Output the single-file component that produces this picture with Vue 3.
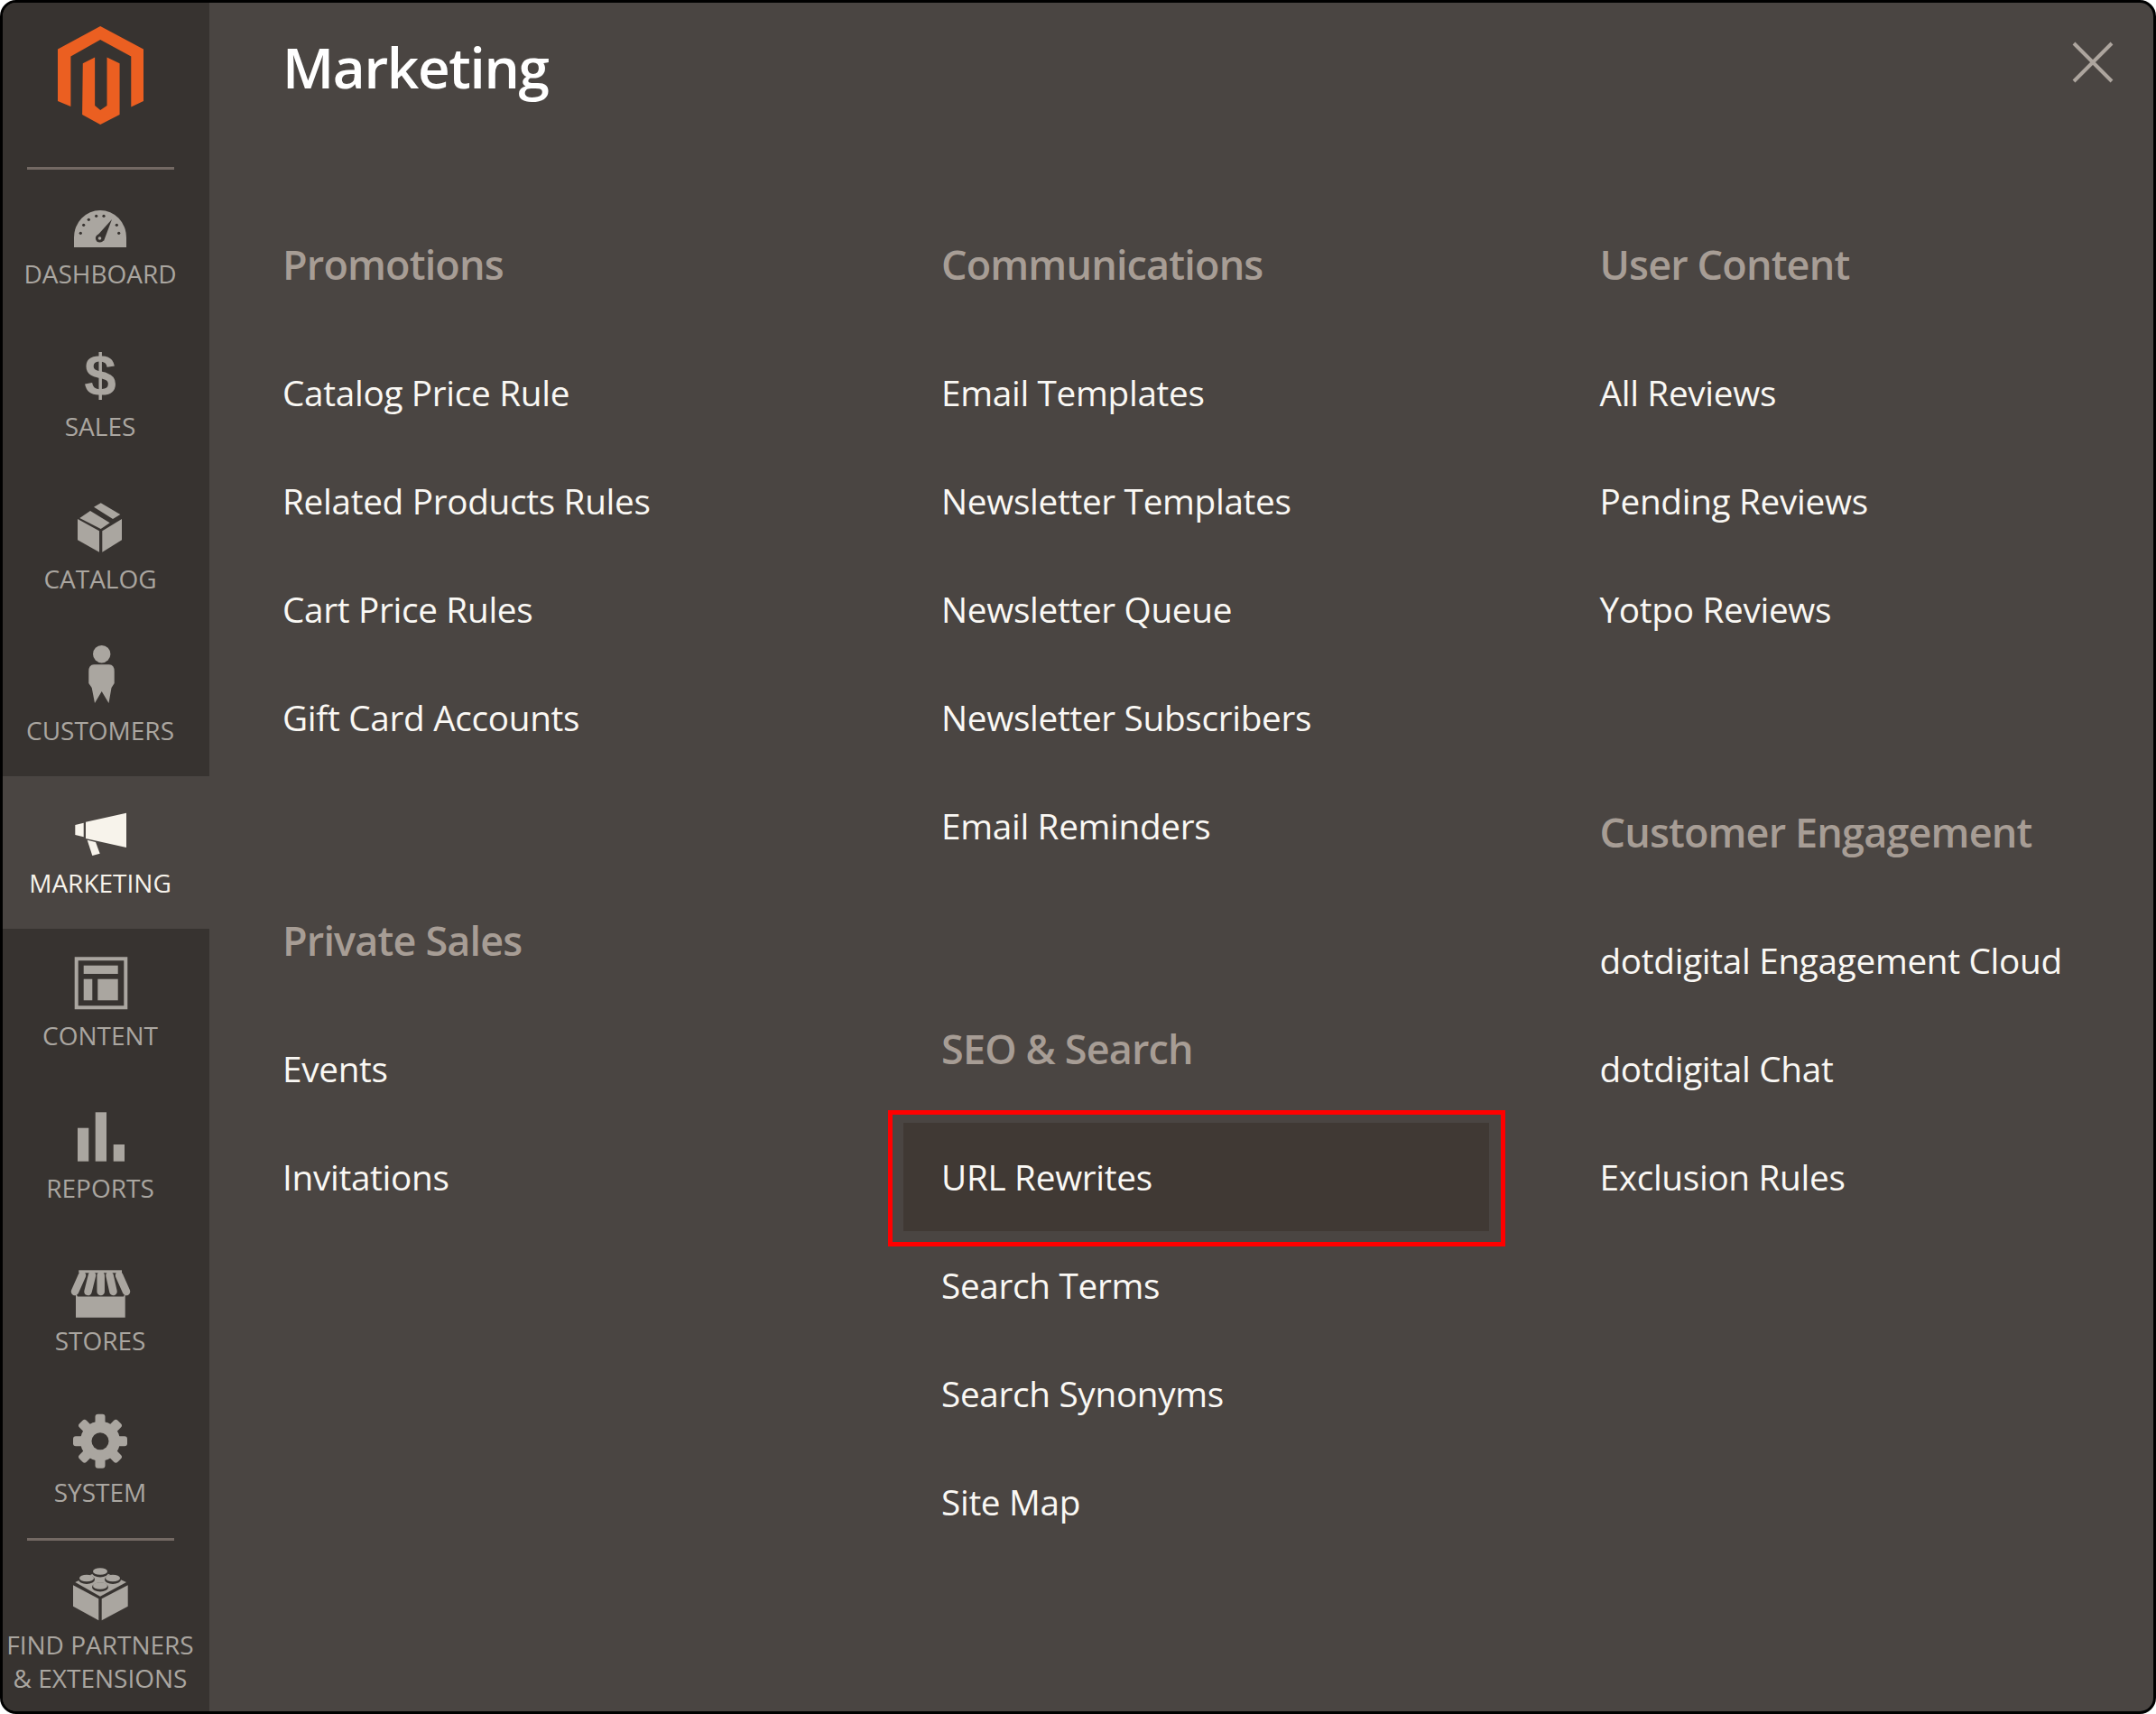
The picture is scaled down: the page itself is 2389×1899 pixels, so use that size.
<script setup>
const nav = [
  { key: 'dashboard', label: 'Dashboard' },
  { key: 'sales', label: 'Sales' },
  { key: 'catalog', label: 'Catalog' },
  { key: 'customers', label: 'Customers' },
  { key: 'marketing', label: 'Marketing', active: true },
  { key: 'content', label: 'Content' },
  { key: 'reports', label: 'Reports' },
  { key: 'stores', label: 'Stores' },
  { key: 'system', label: 'System' },
]
const columns = [
  [
    { title: 'Promotions', items: ['Catalog Price Rule', 'Related Products Rules', 'Cart Price Rules', 'Gift Card Accounts'] },
    { title: 'Private Sales', items: ['Events', 'Invitations'] },
  ],
  [
    { title: 'Communications', items: ['Email Templates', 'Newsletter Templates', 'Newsletter Queue', 'Newsletter Subscribers', 'Email Reminders'] },
    { title: 'SEO & Search', items: ['URL Rewrites', 'Search Terms', 'Search Synonyms', 'Site Map'] },
  ],
  [
    { title: 'User Content', items: ['All Reviews', 'Pending Reviews', 'Yotpo Reviews'] },
    { title: 'Customer Engagement', items: ['dotdigital Engagement Cloud', 'dotdigital Chat', 'Exclusion Rules'] },
  ],
]
const gaugeDots = [[18.3, 53.3], [21.7, 44.3], [27.3, 38.3], [35.7, 34.3], [44, 34.3], [58.3, 44.3], [60.7, 53.3]]
const gearTeeth = [0, 45, 90, 135, 180, 225, 270, 315]
const awning = [[20, 12], [31, 26.5], [40.7, 40.7], [50.5, 54.5], [61, 69]]
const studs = [[40, 17], [25, 24.5], [54, 24.5], [40, 33]]
</script>

<template>
  <div class="frame">
    <aside class="sidebar">
      <div class="brand">
        <svg class="logo" viewBox="192 87 284 326" width="95" height="109">
          <path d="M333 87 476 163V335L435 355V187L333 132 235 187V353L192 335V163Z" />
          <path d="M275 210 315 190V350L333 365 355 350V190L397 210V380L333 413 273 380Z" />
        </svg>
      </div>
      <div class="divider top"></div>
      <ul class="nav">
        <li v-for="n in nav" :key="n.key" class="nav-item" :class="{ active: n.active }">
          <svg class="icon" viewBox="0 0 80 80" width="80" height="80">
            <g v-if="n.key === 'dashboard'">
              <path d="M11 69V58A29 30 0 0 1 69 58V69Z" />
              <circle v-for="(d, i) in gaugeDots" :key="i" class="cut" :cx="d[0]" :cy="d[1]" r="1.6" />
              <path class="cut" d="M53 38 44 62 35 58Z" />
              <circle class="cut" cx="39.5" cy="59" r="4.6" />
              <circle cx="39.5" cy="59" r="1.8" />
            </g>
            <text v-else-if="n.key === 'sales'" class="dollar" x="40" y="63.5" text-anchor="middle">$</text>
            <g v-else-if="n.key === 'catalog'">
              <path d="M15 32 39 45.3V68.7L15 55.3Z" />
              <path d="M42.3 45.3 64 32V55.3L42.3 68.7Z" />
              <path d="M17.3 31 29 23 50.7 36.3 40.7 43Z" />
              <path d="M33 18.7 40.7 14.3 62.3 27 54 32Z" />
            </g>
            <g v-else-if="n.key === 'customers'">
              <circle cx="41.7" cy="13.7" r="9.7" />
              <path d="M33 25.3H50Q55.7 25.3 55.7 33V46L52.5 51 49.5 68 41.7 55 34 68 30.7 51 27.3 46V33Q27.3 25.3 33 25.3Z" />
            </g>
            <g v-else-if="n.key === 'marketing'">
              <path d="M24 30.7 69 20.7V59L24 49Z" />
              <path d="M12.3 34 21.7 31.7V47.3L12.3 45Z" />
              <path d="M25.7 50.7 35 53 39.7 65.7 31.3 68Z" />
            </g>
            <g v-else-if="n.key === 'content'">
              <path fill-rule="evenodd" d="M11.7 11.3H70.3V69.3H11.7ZM15.7 15.3V65.3H66.3V15.3Z" />
              <rect x="21.7" y="20.7" width="38" height="9.3" />
              <rect x="21.7" y="35.7" width="9.6" height="23.6" />
              <rect x="37.3" y="35.7" width="22.4" height="23.6" />
            </g>
            <g v-else-if="n.key === 'reports'">
              <rect x="15" y="31.7" width="12.3" height="37" />
              <rect x="34.7" y="14.3" width="12.3" height="54.4" />
              <rect x="54.7" y="50" width="12.3" height="18.7" />
            </g>
            <g v-else-if="n.key === 'stores'">
              <rect x="16.3" y="20.3" width="47.7" height="3" />
              <line v-for="(a, i) in awning" :key="i" class="stripe" :x1="a[0]" y1="26" :x2="a[1]" y2="44" />
              <path d="M13 46 15 49.5H66L67.7 46V72.7H13Z" />
            </g>
            <g v-else-if="n.key === 'system'">
              <circle cx="40" cy="41.7" r="22" />
              <rect v-for="t in gearTeeth" :key="t" x="34.5" y="11.7" width="11" height="14" rx="3" :transform="`rotate(${t} 40 41.7)`" />
              <circle class="cut" cx="40" cy="41.7" r="9.5" />
            </g>
          </svg>
          <span class="nav-label">{{ n.label }}</span>
        </li>
      </ul>
      <div class="divider"></div>
      <div class="nav-item last">
        <svg class="icon" viewBox="0 0 80 80" width="80" height="80">
          <path d="M10 32.3 38.3 47.3V71.3L10 55.7Z" />
          <path d="M41.7 47.3 70.7 32.3V55.7L41.7 71.3Z" />
          <path d="M12.3 29 40 15.7 69 29 40 44.7Z" />
          <g v-for="(s, i) in studs" :key="i">
            <ellipse class="cut" :cx="s[0]" :cy="s[1] + 1.5" rx="9" ry="5" />
            <ellipse :cx="s[0]" :cy="s[1]" rx="8" ry="3.8" />
          </g>
        </svg>
        <span class="nav-label two-line">Find Partners<br />&amp; Extensions</span>
      </div>
    </aside>

    <main class="panel">
      <h1 class="title">Marketing</h1>
      <button class="close" aria-label="Close">
        <svg viewBox="0 0 46 46" width="46" height="46">
          <path d="M2 2 44 44M44 2 2 44" />
        </svg>
      </button>
      <div class="columns">
        <section v-for="(col, c) in columns" :key="c" class="column">
          <div v-for="g in col" :key="g.title" class="group">
            <h2 class="group-title">{{ g.title }}</h2>
            <ul class="links">
              <li v-for="item in g.items" :key="item" class="link" :class="{ highlight: item === 'URL Rewrites' }">{{ item }}</li>
            </ul>
          </div>
        </section>
      </div>
    </main>
  </div>
</template>

<style>
html, body { margin: 0; background: #fff; }
</style>

<style scoped>
* { box-sizing: border-box; }
ul { list-style: none; margin: 0; padding: 0; }
.frame {
  display: flex;
  width: 2389px;
  height: 1899px;
  border: 3px solid #000;
  border-radius: 18px;
  overflow: hidden;
  background: #4a4542;
  font-family: "Open Sans", "Noto Sans", sans-serif;
}
.sidebar {
  flex: none;
  width: 229px;
  background: #373330;
}
.brand {
  height: 182px;
  padding: 26px 13px 0 0;
  display: flex;
  justify-content: center;
  align-items: flex-start;
}
.logo { display: block; fill: #eb5f21; }
.divider {
  width: 163px;
  height: 3px;
  margin-left: 27px;
  margin-bottom: -3px;
  background: #736963;
  position: relative;
}
.nav-item {
  height: 168.8px;
  padding: 20px 13px 0 0;
  display: flex;
  flex-direction: column;
  align-items: center;
  color: #aaa6a0;
  fill: #aaa6a0;
}
.nav-item.active { background: #4a4542; color: #f7f3eb; fill: #f7f3eb; }
.nav-item.last { height: 190px; }
.icon { display: block; flex: none; }
.cut { fill: #373330; }
.stripe { stroke: #aaa6a0; stroke-width: 8.5; stroke-linecap: round; }
.dollar { font-family: "Liberation Sans", sans-serif; font-weight: 700; font-size: 64px; }
.nav-label {
  font-size: 28px;
  line-height: 37px;
  text-transform: uppercase;
  text-align: center;
  white-space: nowrap;
}
.panel {
  flex: 1;
  min-width: 0;
  position: relative;
  padding: 20.5px 0 0 81px;
}
.title {
  margin: 0 0 110.5px;
  height: 100px;
  font-size: 62px;
  line-height: 100px;
  font-weight: 600;
  letter-spacing: -1.35px;
  color: #fff;
}
.close {
  position: absolute;
  top: 42.5px;
  right: 44px;
  padding: 0;
  border: 0;
  background: none;
  line-height: 0;
}
.close svg { display: block; }
.close path { fill: none; stroke: #ada59e; stroke-width: 4; }
.columns {
  display: grid;
  grid-template-columns: 730px 729.5px 1fr;
}
.group + .group { margin-top: 128px; }
.group-title {
  margin: 0 0 23px;
  height: 118px;
  font-size: 45px;
  line-height: 118px;
  font-weight: 600;
  letter-spacing: -0.85px;
  color: #a79d95;
}
.link {
  height: 120px;
  font-size: 38.7px;
  line-height: 120px;
  letter-spacing: -0.3px;
  color: #faf8f4;
  white-space: nowrap;
}
.link.highlight {
  position: relative;
  width: 649px;
  margin-left: -42px;
  padding-left: 42px;
  background: #403934;
}
.link.highlight::after {
  content: "";
  position: absolute;
  top: -14px;
  right: -18px;
  bottom: -17px;
  left: -17px;
  border: 5.5px solid #f00;
}
</style>
